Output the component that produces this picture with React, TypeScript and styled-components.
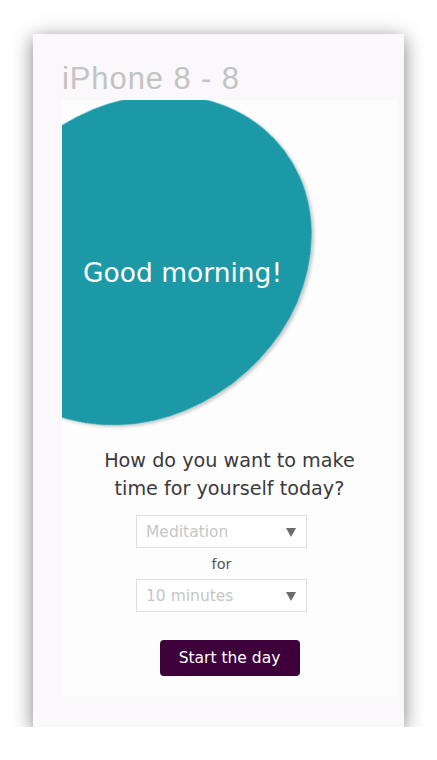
import styled, { createGlobalStyle } from "styled-components";

const GlobalStyle = createGlobalStyle`
  html, body {
    margin: 0;
    padding: 0;
    background: #ffffff;
  }
  body {
    font-family: "DejaVu Sans", "Open Sans", sans-serif;
  }
`;

const Page = styled.div`
  padding: 34px 0 0 33px;
`;

const Frame = styled.div`
  width: 371px;
  height: 693px;
  box-sizing: border-box;
  padding: 0 7px 0 29px;
  background: #faf8fa;
  box-shadow: 0 4px 18px rgba(0, 0, 0, 0.5);
  display: flex;
  flex-direction: column;
`;

const FrameTitle = styled.div`
  height: 66px;
  display: flex;
  align-items: flex-end;
  padding-bottom: 6px;
  box-sizing: border-box;
  font-family: "Liberation Sans", Arial, sans-serif;
  font-size: 31px;
  line-height: 31px;
  letter-spacing: 0.9px;
  color: #c3c3c3;
`;

const Artboard = styled.div`
  width: 335px;
  height: 596px;
  background: #fefdfe;
  overflow: hidden;
  display: flex;
  flex-direction: column;
  align-items: center;
`;

const Hero = styled.div`
  position: relative;
  align-self: stretch;
  height: 330px;
  display: flex;
  align-items: center;
  padding: 14px 0 0 21px;
  box-sizing: border-box;
`;

const Blob = styled.svg`
  position: absolute;
  top: 0;
  left: 0;
  overflow: visible;
`;

const Greeting = styled.h1`
  position: relative;
  margin: 0;
  font-weight: 400;
  font-size: 26.5px;
  color: #ffffff;
`;

const Question = styled.p`
  margin: 17px 0 0;
  text-align: center;
  font-size: 19.2px;
  line-height: 28px;
  color: #3b3b3b;
`;

const Picker = styled.div`
  margin: 12px 16px 0 0;
  display: flex;
  flex-direction: column;
  align-items: center;
`;

const Select = styled.div`
  width: 171px;
  height: 33px;
  box-sizing: border-box;
  border: 1px solid #dedede;
  background: #ffffff;
  display: flex;
  align-items: center;
  justify-content: space-between;
  padding: 0 10px 0 9px;
  font-size: 15.5px;
  color: #c6c6c6;
`;

const Arrow = styled.span<{ $drop?: number }>`
  width: 0;
  height: 0;
  border-left: 5.5px solid transparent;
  border-right: 5.5px solid transparent;
  border-top: 9px solid #6b6b6b;
  margin-top: ${(p) => p.$drop ?? 0}px;
`;

const Joiner = styled.div`
  height: 31px;
  display: flex;
  align-items: center;
  justify-content: center;
  font-size: 14.5px;
  color: #555555;
`;

const StartButton = styled.button`
  margin-top: 28px;
  width: 140px;
  height: 36px;
  border: none;
  border-radius: 4px;
  background: #3d003a;
  color: #ffffff;
  font-family: "DejaVu Sans", "Open Sans", sans-serif;
  font-size: 15.5px;
`;

export default function App() {
  return (
    <Page>
      <GlobalStyle />
      <Frame>
        <FrameTitle>iPhone 8 - 8</FrameTitle>
        <Artboard>
          <Hero>
            <Blob width="335" height="340" viewBox="0 0 335 340">
              <defs>
                <filter id="blobShadow" x="-20%" y="-20%" width="140%" height="140%">
                  <feDropShadow dx="1" dy="3" stdDeviation="1.5" floodColor="#000" floodOpacity="0.2" />
                </filter>
              </defs>
              <ellipse
                cx="77"
                cy="160"
                rx="182"
                ry="155"
                fill="#1a99a7"
                filter="url(#blobShadow)"
                transform="rotate(-37 77 160)"
              />
            </Blob>
            <Greeting>Good morning!</Greeting>
          </Hero>
          <Question>
            How do you want to make
            <br />
            time for yourself today?
          </Question>
          <Picker>
            <Select>
              Meditation
              <Arrow $drop={1} />
            </Select>
            <Joiner>for</Joiner>
            <Select>
              10 minutes
              <Arrow $drop={2} />
            </Select>
          </Picker>
          <StartButton>Start the day</StartButton>
        </Artboard>
      </Frame>
    </Page>
  );
}
